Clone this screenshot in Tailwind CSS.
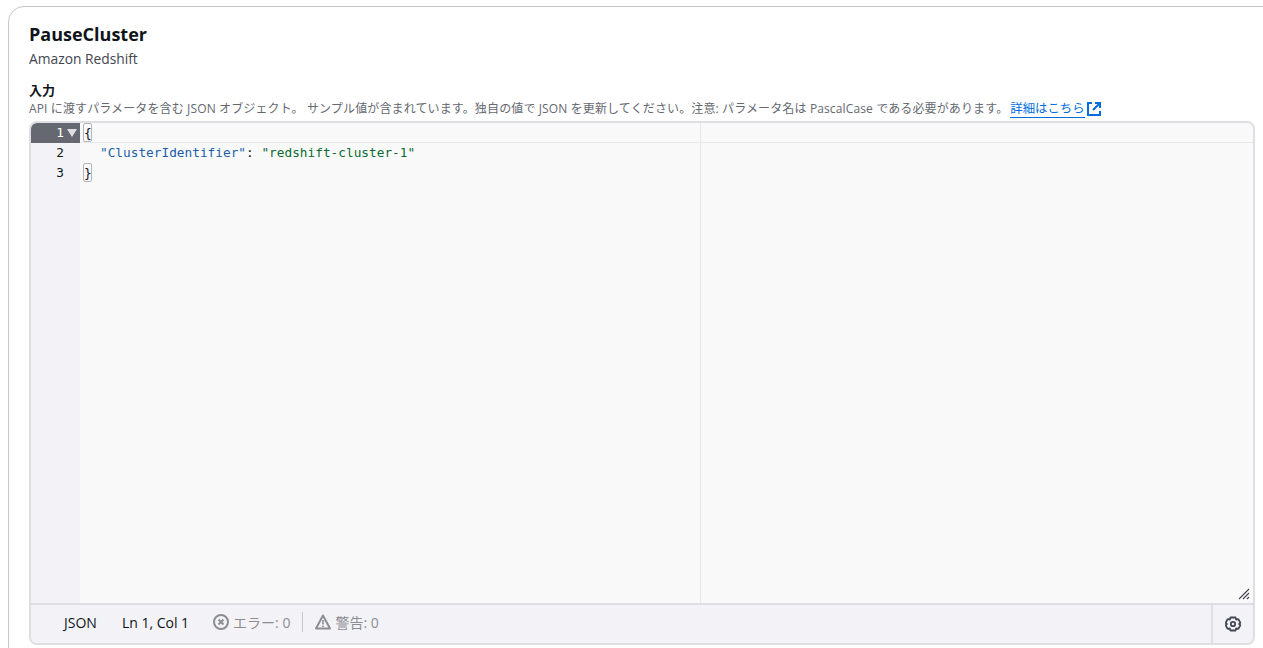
<!DOCTYPE html>
<html lang="ja" class="overflow-hidden">
<head>
  <meta charset="UTF-8" />
  <title>PauseCluster</title>
  <script src="https://cdn.jsdelivr.net/npm/@tailwindcss/browser@4"></script>
</head>
<body class="bg-white h-[648px] overflow-hidden font-['Open_Sans','Noto_Sans_CJK_JP',sans-serif] text-[#0f141a]">
  <div class="ml-2 mt-[6px] w-[1275px] h-[700px] border border-[#c6c6cd] rounded-tl-2xl pl-5">
    <h1 class="pt-[14px] text-[18px] leading-[26px] font-bold">PauseCluster</h1>
    <p class="mt-[2px] text-[13.8px] leading-[20px] text-[#424650]">Amazon Redshift</p>
    <div class="mt-[13px] text-[13px] leading-[16px] font-bold">入力</div>
    <div class="mt-[2px] flex items-center text-[12px] leading-[16px] text-[#656871] h-[17px]">
      <span class="whitespace-pre tracking-[0.13px]">API に渡すパラメータを含む JSON オブジェクト。 サンプル値が含まれています。独自の値で JSON を更新してください。注意: パラメータ名は PascalCase である必要があります。</span>
      <a href="#" class="ml-[2px] text-[12.4px] text-[#006ce0] border-b border-[#006ce0] leading-[17px]">詳細はこちら</a>
      <svg class="ml-[2px] w-[14px] h-[14px]" viewBox="0 0 14 14" fill="none" stroke="#006ce0" stroke-width="2">
        <path d="M5 1H1v12h12V9" />
        <path d="M8 1h5v5M13 1L6 8" />
      </svg>
    </div>
    <div class="mt-[4px] w-[1226px] h-[524px] border-2 border-[#dedee3] rounded-lg flex flex-col overflow-hidden">
      <div class="flex-1 flex relative min-h-0 bg-[#f9f9fa] font-['DejaVu_Sans_Mono',monospace] text-[12.77px] leading-[20px]">
        <div class="w-[49px] bg-[#f3f3f7] text-[#0f141a] shrink-0">
          <div class="h-[20px] bg-[#656871] text-white flex items-center justify-end pr-[3px] gap-[3px]">
            <span>1</span>
            <svg class="w-[10px] h-[8px]" viewBox="0 0 10 8" fill="#dedee3"><path d="M0 0h10L5 8z" /></svg>
          </div>
          <div class="h-[20px] text-right pr-4">2</div>
          <div class="h-[20px] text-right pr-4">3</div>
        </div>
        <div class="flex-1 relative">
          <div class="h-[20px] border-b border-[#e8e8ec] pl-[3px]">
            <span class="inline-block h-[19px] w-[9px] border border-[#b4b4bb] rounded-[2px] leading-[18px] text-[#0f141a]">{</span>
          </div>
          <div class="h-[20px] pl-[20px] whitespace-pre"><span class="text-[#1c5fa8]">"ClusterIdentifier"</span>: <span class="text-[#0b6b2f]">"redshift-cluster-1"</span></div>
          <div class="h-[20px] pl-[3px]">
            <span class="inline-block h-[19px] w-[9px] border border-[#b4b4bb] rounded-[2px] leading-[18px]">}</span>
          </div>
          <div class="absolute top-0 bottom-0 left-[620px] w-px bg-[#e8e8ec]"></div>
          <svg class="absolute right-[3px] bottom-[3px] w-3 h-3" viewBox="0 0 12 12" stroke="#424650" stroke-width="1.1" fill="none">
            <path d="M1 11L11 1M5 11l6-6M9 11l2-2" />
          </svg>
        </div>
      </div>
      <div class="h-[40px] shrink-0 border-t-2 border-[#dedee3] bg-[#f3f3f7] flex items-center text-[14px] pl-[33px]">
        <div class="flex items-center h-full pb-1">
          <span>JSON</span>
          <span class="ml-[25px]">Ln 1, Col 1</span>
          <svg class="ml-[24px] w-4 h-4" viewBox="0 0 16 16" fill="none" stroke="#8c8c94" stroke-width="2">
            <circle cx="8" cy="8" r="7" />
            <path d="M5.5 5.5l5 5M10.5 5.5l-5 5" />
          </svg>
          <span class="ml-1 text-[#8c8c94]">エラー: 0</span>
          <span class="ml-3 w-px h-5 bg-[#c6c6cd]"></span>
          <svg class="ml-3 w-4 h-4" viewBox="0 0 16 16" fill="none" stroke="#8c8c94" stroke-width="2" stroke-linejoin="round">
            <path d="M8 1.5L15 14.5H1z" />
            <path d="M8 6v4.5M8 11.5v1.5" stroke-width="1.6" />
          </svg>
          <span class="ml-1 text-[#8c8c94]">警告: 0</span>
        </div>
        <div class="ml-auto h-full w-[42px] border-l-2 border-[#dedee3] flex items-center justify-center">
          <svg class="w-4 h-4" viewBox="0 0 16 16" fill="none" stroke="#424650" stroke-width="1.8" stroke-linejoin="round">
            <path d="M5.5 1.5h5l.7 2 2.1-.4 2.2 3.7-1.4 1.2 1.4 1.2-2.2 3.7-2.1-.4-.7 2h-5l-.7-2-2.1.4L.5 9.2l1.4-1.2L.5 6.8l2.2-3.7 2.1.4z" />
            <circle cx="8" cy="8" r="2.2" />
          </svg>
        </div>
      </div>
    </div>
  </div>
</body>
</html>
